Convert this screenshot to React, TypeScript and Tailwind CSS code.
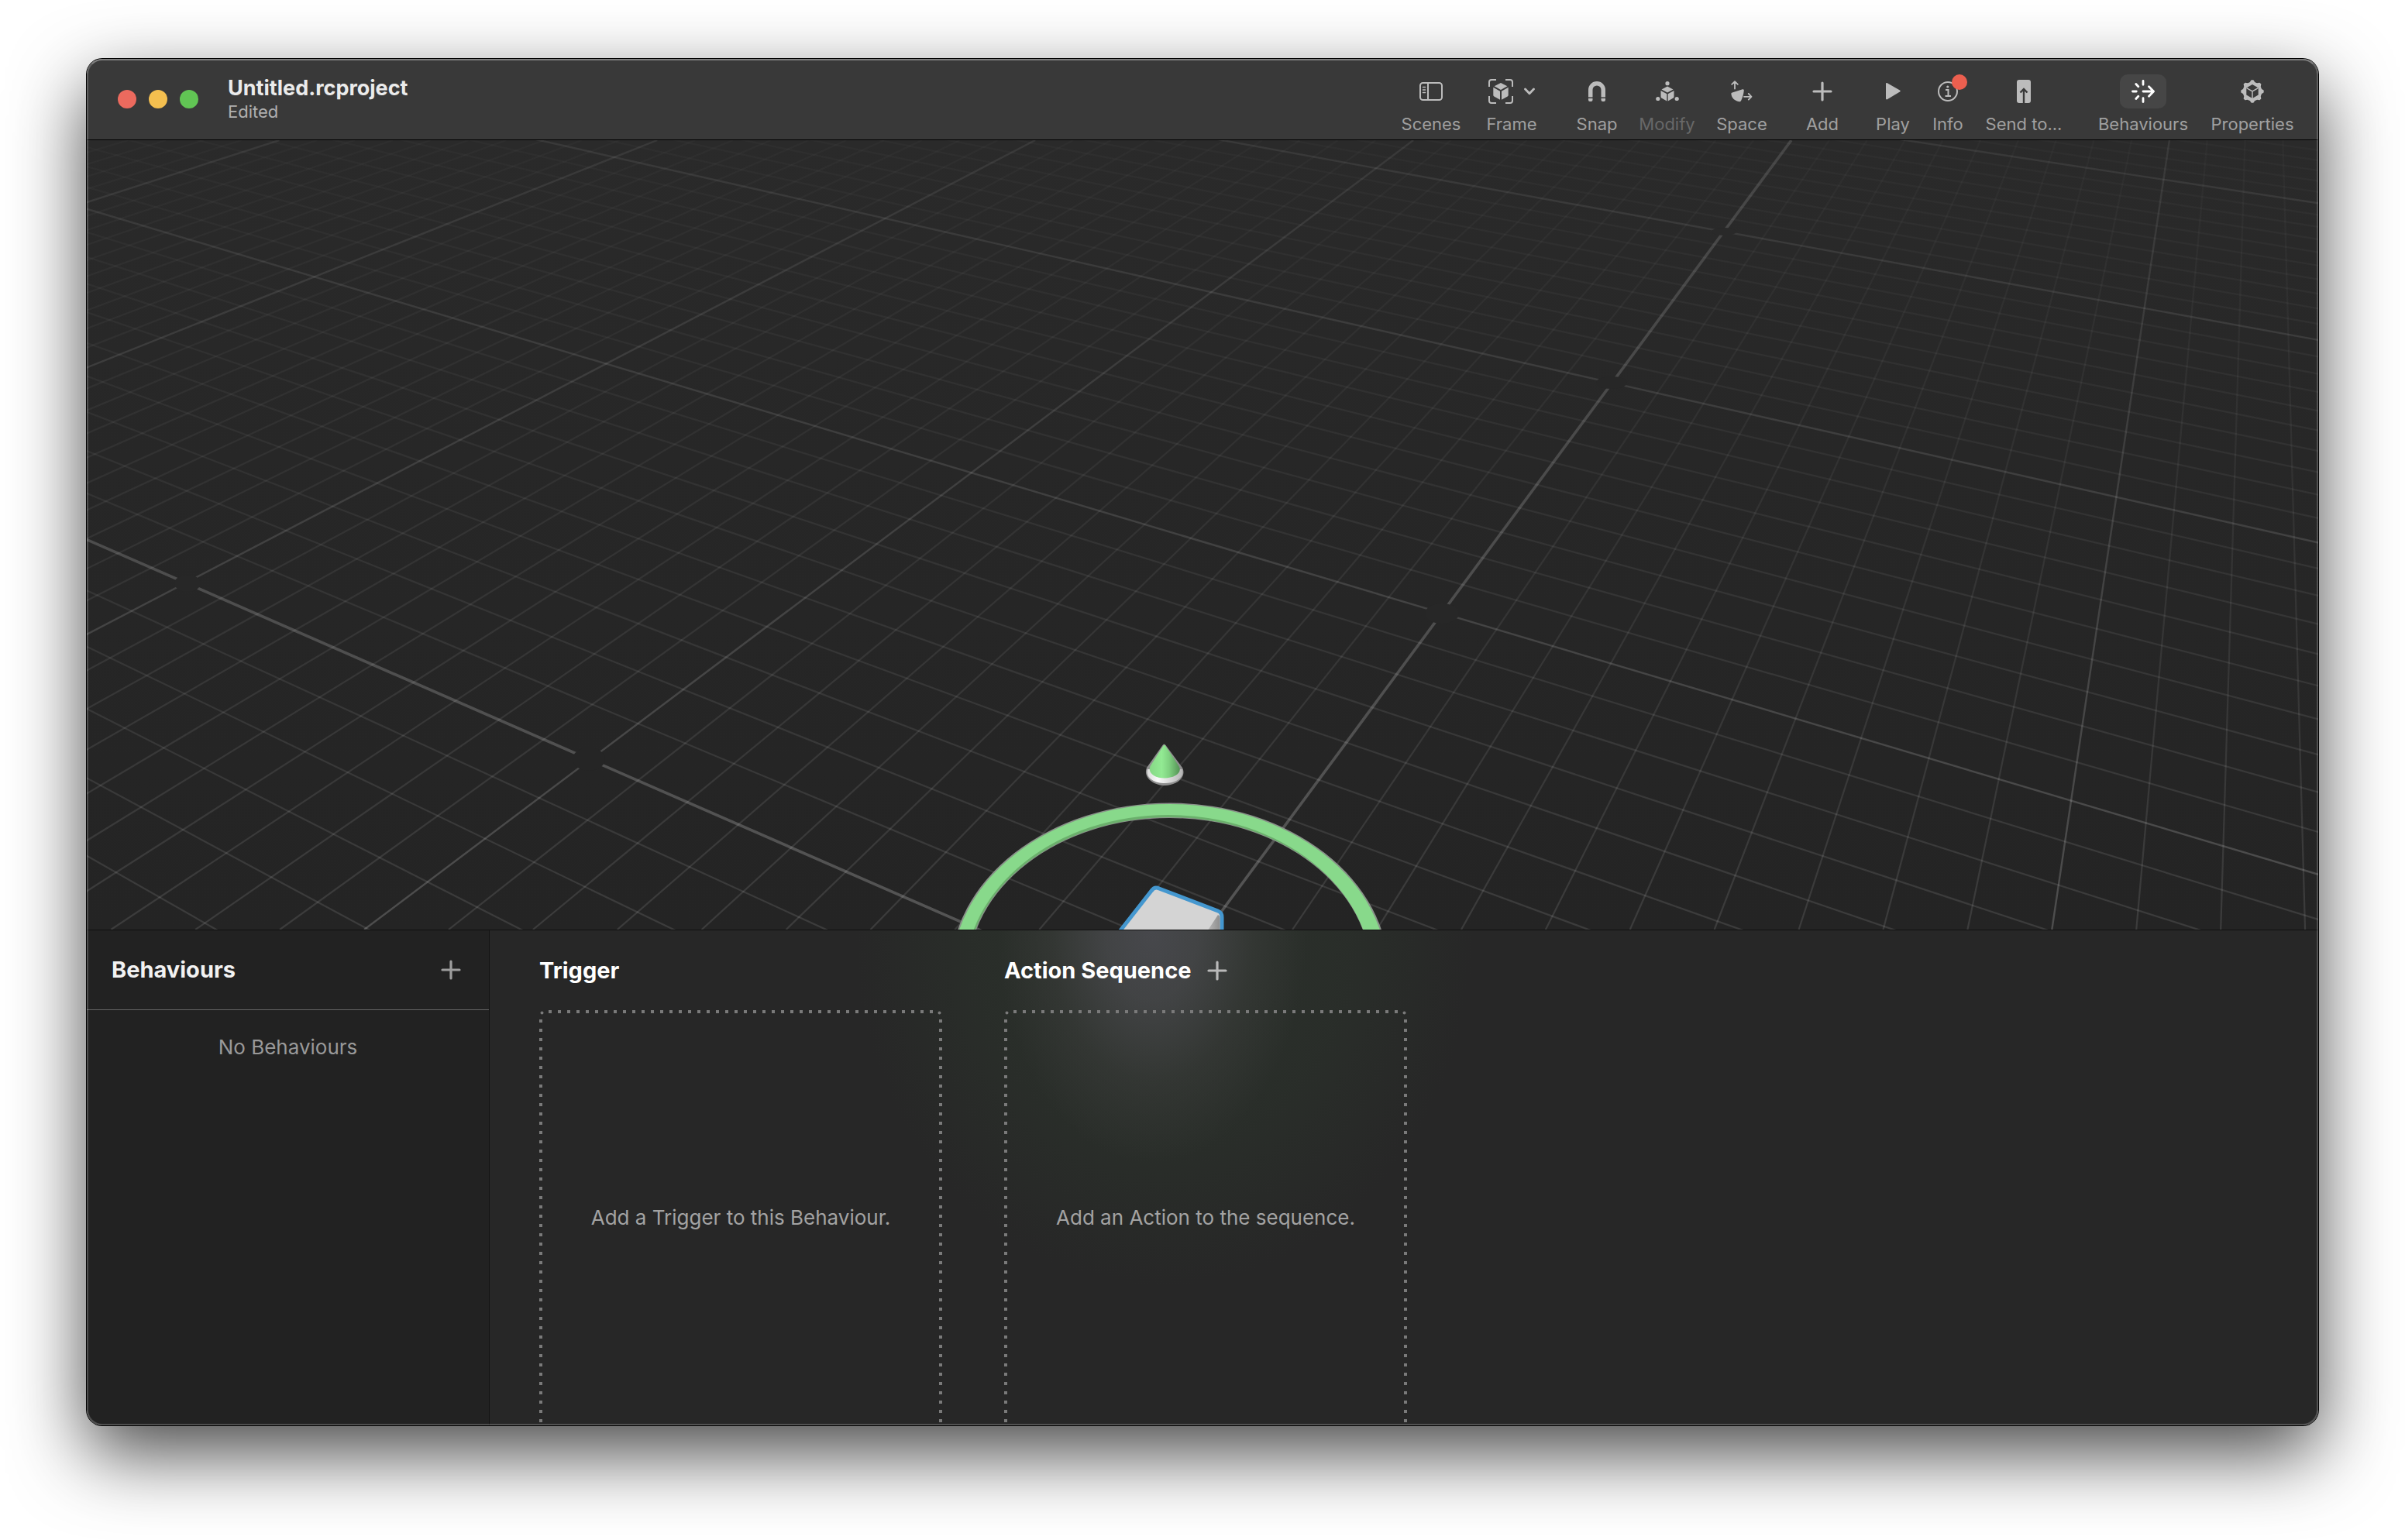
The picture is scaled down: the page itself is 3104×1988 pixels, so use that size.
import React from "react";

type IconProps = { className?: string };

/* ---------- toolbar icons ---------- */

function ScenesIcon() {
  return (
    <svg width="30" height="24" viewBox="0 0 30 24" fill="none" stroke="currentColor" strokeWidth="2" aria-hidden="true">
      <rect x="1" y="1" width="28" height="22" rx="3.5" />
      <path d="M11 1v22" />
      <path d="M4.5 6.5h3M4.5 10h3M4.5 13.5h3" strokeWidth="1.6" strokeLinecap="round" />
    </svg>
  );
}

function FrameIcon() {
  return (
    <svg width="32" height="32" viewBox="0 0 32 32" fill="none" aria-hidden="true">
      <path
        d="M1 10V4a3 3 0 0 1 3-3h6M22 1h6a3 3 0 0 1 3 3v6M31 22v6a3 3 0 0 1-3 3h-6M10 31H4a3 3 0 0 1-3-3v-6"
        stroke="currentColor"
        strokeWidth="2"
      />
      <path
        d="M16 5l8.4 4.2L16 14 7.6 9.200zM6.300 10.800L15 15.700v11L7.300 22.600a2 2 0 0 1-1-1.800zM25.700 10.800L17 15.700v11l7.700-4.100a2 2 0 0 0 1-1.800z"
        fill="currentColor"
      />
    </svg>
  );
}

function SnapIcon() {
  return (
    <svg width="22" height="26" viewBox="0 0 22 26" fill="none" aria-hidden="true">
      <path d="M2.750 20.500V11a8.250 8.250 0 0 1 16.500 0v9.500" stroke="currentColor" strokeWidth="5.500" />
      <path d="M0 22h5.500v2a2 2 0 0 1-2 2H2a2 2 0 0 1-2-2zM16.500 22H22v2a2 2 0 0 1-2 2h-1.500a2 2 0 0 1-2-2z" fill="currentColor" />
    </svg>
  );
}

function ModifyIcon() {
  return (
    <svg width="30" height="26" viewBox="0 0 30 26" fill="currentColor" aria-hidden="true">
      <circle cx="15" cy="2.700" r="2.600" />
      <circle cx="2.800" cy="22.500" r="2.600" />
      <circle cx="27.200" cy="22.500" r="2.600" />
      <path d="M15 6.500l7.500 3.900L15 14.500l-7.500-4.100zM6.500 12l7.800 4.200v9.200l-6.900-3.800a1.800 1.800 0 0 1-.9-1.600zM23.500 12l-7.800 4.200v9.200l6.900-3.800a1.800 1.800 0 0 0 .9-1.600z" />
    </svg>
  );
}

function SpaceIcon() {
  return (
    <svg width="28" height="28" viewBox="0 0 28 28" fill="none" aria-hidden="true">
      <path d="M5 10.500V1.500M1.200 4.800L5 1.200l3.800 3.600M17 20.800h9.500M22.800 17l3.700 3.800-3.700 3.800" stroke="currentColor" strokeWidth="1.800" strokeLinecap="round" strokeLinejoin="round" />
      <path d="M1 15.800L15 11.300c1-.3 1.900.4 1.800 1.400-.5 4.700-1.600 9-3.700 13.300-.5 1-1.300 1.400-2.300 1.200C5 26 .9 22.800.4 17.200c-.1-.700.1-1.200.6-1.400z" fill="currentColor" />
    </svg>
  );
}

function PlusIcon({ className }: IconProps) {
  return (
    <svg className={className} viewBox="0 0 26 26" fill="none" stroke="currentColor" strokeWidth="3.200" strokeLinecap="round" aria-hidden="true">
      <path d="M13 2v22M2 13h22" />
    </svg>
  );
}

function PlayIcon() {
  return (
    <svg width="22" height="24" viewBox="0 0 22 24" fill="currentColor" aria-hidden="true">
      <path d="M2 2.300c0-1 .9-1.500 1.800-1L20 10.500c1 .6 1 1.400 0 2L3.800 22.200c-.9.500-1.800 0-1.800-1z" />
    </svg>
  );
}

function InfoIcon() {
  return (
    <svg width="26" height="26" viewBox="0 0 26 26" fill="none" stroke="currentColor" strokeWidth="2" aria-hidden="true">
      <circle cx="13" cy="13" r="12" />
      <path d="M10 11h3.500v8M9.500 19h7.500" />
      <circle cx="12.800" cy="7" r="1.600" fill="currentColor" stroke="none" />
    </svg>
  );
}

function SendIcon() {
  return (
    <svg width="18" height="30" viewBox="0 0 18 30" fill="none" aria-hidden="true">
      <rect width="18" height="30" rx="3" fill="currentColor" />
      <path d="M9 30V12.500M4.500 16.500L9 12l4.500 4.500" stroke="#393939" strokeWidth="2.400" />
    </svg>
  );
}

function BehavioursIcon() {
  return (
    <svg width="30" height="30" viewBox="0 0 30 30" fill="none" stroke="currentColor" strokeWidth="2.800" strokeLinecap="round" strokeLinejoin="round" aria-hidden="true">
      <path d="M15 1.500v4.800M15 23.700v4.800M1.500 15h4.800M5.800 5.500l3 3.300M5.800 24.500l3-3.300M15 15h13M22.500 8.800l6 6.200-6 6.200" />
    </svg>
  );
}

function PropertiesIcon() {
  const teeth = [0, 45, 90, 135, 180, 225, 270, 315];
  return (
    <svg width="30" height="30" viewBox="0 0 30 30" fill="none" aria-hidden="true">
      {teeth.map((a) => (
        <path key={a} d="M11 4.500L13.200.8a1 1 0 0 1 .8-.5h2a1 1 0 0 1 .8.500L19 4.500z" fill="currentColor" transform={`rotate(${a} 15 15)`} />
      ))}
      <circle cx="15" cy="15" r="12.300" fill="currentColor" />
      <path d="M15 6l7.700 4.400v9.200L15 24l-7.700-4.400v-9.200z" fill="#393939" />
      <path d="M7.600 10.700l7.400 4.100 7.400-4.100M15 14.800V24" stroke="currentColor" strokeWidth="1.500" />
    </svg>
  );
}

/* ---------- toolbar ---------- */

type ToolItemProps = {
  label: string;
  width: string;
  children: React.ReactNode;
  active?: boolean;
  disabled?: boolean;
};

function ToolItem({ label, width, children, active, disabled }: ToolItemProps) {
  return (
    <button
      type="button"
      disabled={disabled}
      aria-pressed={active}
      className={`flex shrink-0 flex-col items-center gap-1.5 ${width}`}
    >
      <span
        className={`relative flex h-11 items-center justify-center ${
          active ? "w-15 rounded-[10px] bg-[#464646] text-white" : "text-[#bcbcbc]"
        }`}
      >
        {children}
      </span>
      <span className={`text-[22px] leading-7 whitespace-nowrap ${disabled ? "text-[#686868]" : "text-[#a0a0a0]"}`}>
        {label}
      </span>
    </button>
  );
}

function Toolbar() {
  return (
    <header className="flex h-[105px] shrink-0 items-center border-b border-black bg-[#393939] pl-10 pr-[31px]">
      <div className="flex gap-4">
        <button type="button" aria-label="Close" className="size-6 rounded-full bg-[#ec6a5e]" />
        <button type="button" aria-label="Minimise" className="size-6 rounded-full bg-[#f4bf4f]" />
        <button type="button" aria-label="Zoom" className="size-6 rounded-full bg-[#61c554]" />
      </div>
      <div className="ml-[38px]">
        <h1 className="text-[27px] leading-8 font-bold text-[#ebebeb]">Untitled.rcproject</h1>
        <p className="text-[22px] leading-7 text-[#b0b0b0]">Edited</p>
      </div>
      <nav aria-label="Toolbar" className="ml-auto flex gap-12 self-start pt-5">
        <div className="flex gap-[33px] pr-0.5">
          <ToolItem label="Scenes" width="w-[76px]"><ScenesIcon /></ToolItem>
          <ToolItem label="Frame" width="w-[66px]">
            <span className="flex items-center gap-3.5">
              <FrameIcon />
              <svg width="14" height="10" viewBox="0 0 14 10" fill="none" stroke="currentColor" strokeWidth="2.800" strokeLinecap="round" strokeLinejoin="round" aria-hidden="true">
                <path d="M1.500 2L7 7.800 12.500 2" />
              </svg>
            </span>
          </ToolItem>
        </div>
        <div className="flex gap-7 pr-0.5">
          <ToolItem label="Snap" width="w-[54px]"><SnapIcon /></ToolItem>
          <ToolItem label="Modify" width="w-[71px]" disabled><ModifyIcon /></ToolItem>
          <ToolItem label="Space" width="w-[66px]"><SpaceIcon /></ToolItem>
        </div>
        <ToolItem label="Add" width="w-[42px]"><PlusIcon className="size-[26px]" /></ToolItem>
        <div className="flex gap-[30px]">
          <ToolItem label="Play" width="w-[44px]"><PlayIcon /></ToolItem>
          <ToolItem label="Info" width="w-[38px]">
            <InfoIcon />
            <span className="absolute top-0 -right-3 size-5 rounded-full bg-[#ec5f4f]" />
          </ToolItem>
          <ToolItem label="Send to..." width="w-[98px]"><SendIcon /></ToolItem>
        </div>
        <div className="flex gap-[30px]">
          <ToolItem label="Behaviours" width="w-[114px]" active><BehavioursIcon /></ToolItem>
          <ToolItem label="Properties" width="w-[108px]"><PropertiesIcon /></ToolItem>
        </div>
      </nav>
    </header>
  );
}

/* ---------- 3D viewport ---------- */

// Level-horizon camera: every "u" line runs to one vanishing point, every "v" line to another.
const HORIZON = -646;
const VP_U = 2923;
const VP_V = -2958;
const LEFT = 112;
const RIGHT = 2992;
const TOP = 181;
const BOTTOM = 1200;

type Line = { key: string; x1: number; y1: number; x2: number; y2: number; index: number };

function uLine(u: number): Line {
  const s = 0.7388 + 0.059 * u;
  return {
    key: `u${u}`,
    x1: VP_U - s * (TOP - HORIZON),
    y1: TOP,
    x2: VP_U - s * (BOTTOM - HORIZON),
    y2: BOTTOM,
    index: u,
  };
}

function vLine(v: number): Line {
  const s = 2.2866 + 0.1066 * v;
  return {
    key: `v${v}`,
    x1: LEFT,
    y1: HORIZON + (LEFT - VP_V) / s,
    x2: RIGHT,
    y2: HORIZON + (RIGHT - VP_V) / s,
    index: v,
  };
}

function range(from: number, to: number) {
  return Array.from({ length: to - from + 1 }, (_, i) => from + i);
}

const lines: Line[] = [...range(-14, 56).map(uLine), ...range(-14, 52).map(vLine)];

function strokeFor(index: number) {
  if (index === 0) return "url(#axis)";
  return index % 10 === 0 ? "url(#major)" : "url(#minor)";
}

const joints = [
  { cx: 242, cy: 753, rx: 17, ry: 11 },
  { cx: 760, cy: 980, rx: 21, ry: 15 },
  { cx: 1861, cy: 792, rx: 22, ry: 13 },
  { cx: 2080, cy: 494, rx: 20, ry: 8 },
  { cx: 2225, cy: 299, rx: 16, ry: 5 },
];

function Viewport() {
  return (
    <main className="min-h-0 flex-1 bg-[#262626]">
      <svg className="block h-full w-full" viewBox="112 181 2880 1019" preserveAspectRatio="xMidYMax slice" role="img" aria-label="Scene viewport">
        <defs>
          <linearGradient id="floor" x1="0" x2="0" y1="0" y2="1">
            <stop offset="0" stopColor="#2a2a2a" />
            <stop offset="0.4" stopColor="#272727" />
            <stop offset="1" stopColor="#242424" />
          </linearGradient>
          <linearGradient id="minor" gradientUnits="userSpaceOnUse" x1="0" x2="0" y1="181" y2="1200">
            <stop offset="0" stopColor="#fff" stopOpacity="0.02" />
            <stop offset="0.4" stopColor="#fff" stopOpacity="0.05" />
            <stop offset="1" stopColor="#fff" stopOpacity="0.11" />
          </linearGradient>
          <linearGradient id="major" gradientUnits="userSpaceOnUse" x1="0" x2="0" y1="181" y2="1200">
            <stop offset="0" stopColor="#fff" stopOpacity="0.07" />
            <stop offset="0.4" stopColor="#fff" stopOpacity="0.11" />
            <stop offset="1" stopColor="#fff" stopOpacity="0.19" />
          </linearGradient>
          <linearGradient id="axis" gradientUnits="userSpaceOnUse" x1="0" x2="0" y1="181" y2="1200">
            <stop offset="0" stopColor="#fff" stopOpacity="0.13" />
            <stop offset="1" stopColor="#fff" stopOpacity="0.22" />
          </linearGradient>
          <linearGradient id="cone" x1="0" x2="1" y1="0" y2="0">
            <stop offset="0" stopColor="#86d886" />
            <stop offset="0.4" stopColor="#92ea93" />
            <stop offset="0.65" stopColor="#7fd080" />
            <stop offset="1" stopColor="#549355" />
          </linearGradient>
          <linearGradient id="coneBase" x1="0" x2="1" y1="0" y2="0">
            <stop offset="0" stopColor="#d9d9d9" />
            <stop offset="0.3" stopColor="#fafafa" />
            <stop offset="1" stopColor="#b4b4b4" />
          </linearGradient>
          <linearGradient id="side" x1="0" x2="1" y1="0" y2="0">
            <stop offset="0" stopColor="#b5b5b5" />
            <stop offset="1" stopColor="#8e8e8e" />
          </linearGradient>
        </defs>
        <rect x={LEFT} y={TOP} width={RIGHT - LEFT} height={BOTTOM - TOP} fill="url(#floor)" />
        {lines.map((l) => (
          <line
            key={l.key}
            x1={l.x1}
            y1={l.y1}
            x2={l.x2}
            y2={l.y2}
            stroke={strokeFor(l.index)}
            strokeWidth={l.index === 0 ? 3.6 : l.index % 10 === 0 ? 2.4 : 2.2}
          />
        ))}
        {joints.map((j) => (
          <ellipse key={j.cx} {...j} fill={j.cy < 400 ? "#292929" : j.cy < 850 ? "#272727" : "#252525"} />
        ))}

        {/* rotation ring */}
        <path
          fillRule="evenodd"
          d="M1226.500 1257a283 220.500 0 1 1 566 0a283 220.500 0 1 1-566 0zM1249.500 1257a260 201 0 1 0 520 0a260 201 0 1 0-520 0z"
          fill="#8b918b"
        />
        <path
          fillRule="evenodd"
          d="M1228.500 1257a281 219 0 1 1 562 0a281 219 0 1 1-562 0zM1248 1258a261.500 203 0 1 0 523 0a261.500 203 0 1 0-523 0z"
          fill="#6bb06c"
        />
        <path
          fillRule="evenodd"
          d="M1228.500 1257a281 219 0 1 1 562 0a281 219 0 1 1-562 0zM1245.500 1260a262.500 208 0 1 0 525 0a262.500 208 0 1 0-525 0z"
          fill="#88d98b"
        />

        {/* vertical move handle */}
        <path d="M1500.500 962q2-3 4 0L1526 991c6 12-7 23-22.500 23S1475 1003 1480 991z" fill="#8f8f8f" />
        <path d="M1481 993h45c3 11-8 18-22.500 18S1478 1004 1481 993z" fill="url(#coneBase)" />
        <path d="M1501.500 962.500q1-1.500 2.500 0L1521.500 989c5 9-6 15.500-18.500 15.500s-22-6.500-18.500-15.500z" fill="url(#cone)" />

        {/* selected cube */}
        <path
          d="M1436 1214L1486 1150q4-6 10-3l76 29q5 2 5 8v31z"
          fill="#d4d4d4"
          stroke="#4497cf"
          strokeWidth="5"
          strokeLinejoin="round"
        />
        <path d="M1572 1181q2.500 1 2.500 4V1200h-15z" fill="url(#side)" />
      </svg>
    </main>
  );
}

/* ---------- behaviours panel ---------- */

function DropArea({ text }: { text: string }) {
  return (
    <div className="relative flex w-[520px] flex-1 items-center justify-center overflow-hidden">
      <svg className="absolute inset-0 h-full w-full text-[#7a7a7a]" fill="none" stroke="currentColor" strokeWidth="4" aria-hidden="true">
        <line x1="12" y1="2" x2="508" y2="2" strokeDasharray="4 8" />
        <line x1="2" y1="12" x2="2" y2="100%" strokeDasharray="4 8" />
        <line x1="518" y1="12" x2="518" y2="100%" strokeDasharray="4 8" />
        <circle cx="3.500" cy="3.500" r="2" fill="currentColor" stroke="none" />
        <circle cx="516.500" cy="3.500" r="2" fill="currentColor" stroke="none" />
      </svg>
      <p className="text-[26px] leading-8 text-[#a3a3a3]">{text}</p>
    </div>
  );
}

function BehavioursPanel() {
  return (
    <section className="flex h-[640px] shrink-0 border-t border-[#101010]">
      <aside className="flex w-[520px] shrink-0 flex-col border-r border-[#141414] bg-[#222222]">
        <div className="flex h-[103px] items-center justify-between border-b border-[#656565] pl-8 pr-9">
          <h2 className="text-[29px] leading-9 font-bold text-[#f2f2f2]">Behaviours</h2>
          <button type="button" aria-label="Add behaviour" className="text-[#9d9d9d]">
            <PlusIcon className="size-[26px]" />
          </button>
        </div>
        <p className="pt-[30px] text-center text-[26px] leading-9 text-[#999999]">No Behaviours</p>
      </aside>
      <div className="flex flex-1 gap-20 bg-[#272727] bg-[radial-gradient(200px_300px_at_855px_0px,rgba(76,76,82,0.85),rgba(76,76,80,0.7)_30%,rgba(72,72,72,0.3)_65%,transparent),radial-gradient(400px_460px_at_870px_0px,rgba(46,58,46,0.5),rgba(46,58,46,0.35)_60%,transparent)] pl-16">
        <div className="flex flex-col">
          <div className="flex h-[103px] items-center">
            <h2 className="text-[29px] leading-9 font-bold text-white">Trigger</h2>
          </div>
          <DropArea text="Add a Trigger to this Behaviour." />
        </div>
        <div className="flex flex-col">
          <div className="flex h-[103px] items-center gap-5">
            <h2 className="text-[29px] leading-9 font-bold text-white">Action Sequence</h2>
            <button type="button" aria-label="Add action" className="text-[#b9b9b9]">
              <PlusIcon className="size-[26px]" />
            </button>
          </div>
          <DropArea text="Add an Action to the sequence." />
        </div>
      </div>
    </section>
  );
}

export default function App() {
  return (
    <div className="flex h-screen flex-col bg-white px-28 pt-19 pb-37 font-['Inter','Liberation_Sans',sans-serif]">
      <div className="relative flex min-h-0 flex-1 flex-col overflow-hidden rounded-[20px] shadow-[0_0_0_1px_#000,0_36px_96px_rgba(0,0,0,0.72)]">
        <Toolbar />
        <Viewport />
        <BehavioursPanel />
        <div className="pointer-events-none absolute inset-0 rounded-[20px] border-2 border-white/20 border-t-white/35" />
      </div>
    </div>
  );
}
